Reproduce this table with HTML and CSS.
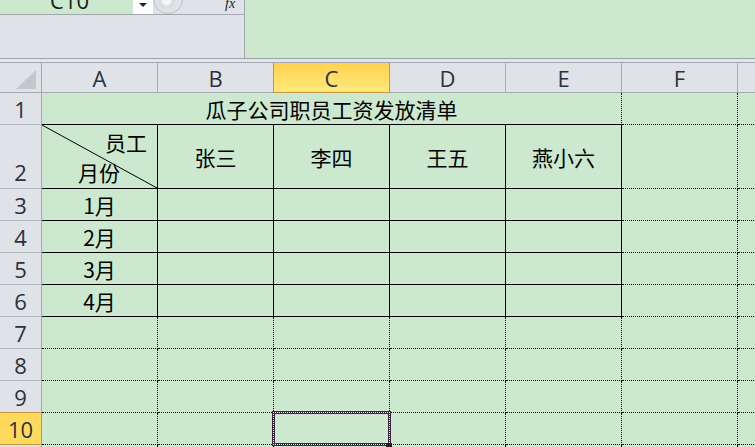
FILE: index.html
```html
<!DOCTYPE html>
<html lang="zh-CN">
<head>
    <meta charset="UTF-8">
    <title>瓜子公司职员工资发放清单</title>
    <link rel="stylesheet" href="styles.css">
</head>
<body>

<!-- Formula bar area -->
<div class="top">
    <div class="top-left">
        <div class="fbar">
            <div class="namebox"><span>C10</span></div>
            <div class="drop"><span class="arrow"></span></div>
            <div class="knob"></div>
            <div class="fx">fx</div>
        </div>
        <div class="panel"></div>
    </div>
    <div class="top-right"></div>
</div>
<div class="gap"></div>

<!-- Sheet grid -->
<div class="sheet">
    <div class="corner">
        <svg width="20" height="19" viewBox="0 0 20 19"><polygon points="20,0 20,19 0,19" fill="#c3c6ca"/></svg>
    </div>
    <div class="ch">A</div>
    <div class="ch">B</div>
    <div class="ch ch-sel">C</div>
    <div class="ch">D</div>
    <div class="ch">E</div>
    <div class="ch">F</div>
    <div class="ch"></div>

    <div class="rh">1</div>
    <div class="title">瓜子公司职员工资发放清单</div>
    <div class="c"></div>
    <div class="c"></div>

    <div class="rh rh-tall">2</div>
    <div class="t diag">
        <svg class="diag-line" viewBox="0 0 115 63" preserveAspectRatio="none"><line x1="0" y1="0" x2="115" y2="63" stroke="#000" stroke-width="1"/></svg>
        <div class="diag-top">员工</div>
        <div class="diag-bottom">月份</div>
    </div>
    <div class="t">张三</div>
    <div class="t">李四</div>
    <div class="t">王五</div>
    <div class="t">燕小六</div>
    <div class="c"></div>
    <div class="c"></div>

    <div class="rh">3</div>
    <div class="t">1月</div>
    <div class="t"></div><div class="t"></div><div class="t"></div><div class="t"></div>
    <div class="c"></div><div class="c"></div>

    <div class="rh">4</div>
    <div class="t">2月</div>
    <div class="t"></div><div class="t"></div><div class="t"></div><div class="t"></div>
    <div class="c"></div><div class="c"></div>

    <div class="rh">5</div>
    <div class="t">3月</div>
    <div class="t"></div><div class="t"></div><div class="t"></div><div class="t"></div>
    <div class="c"></div><div class="c"></div>

    <div class="rh">6</div>
    <div class="t">4月</div>
    <div class="t"></div><div class="t"></div><div class="t"></div><div class="t"></div>
    <div class="c"></div><div class="c"></div>

    <div class="rh">7</div>
    <div class="c"></div><div class="c"></div><div class="c"></div><div class="c"></div><div class="c"></div><div class="c"></div><div class="c"></div>

    <div class="rh">8</div>
    <div class="c"></div><div class="c"></div><div class="c"></div><div class="c"></div><div class="c"></div><div class="c"></div><div class="c"></div>

    <div class="rh">9</div>
    <div class="c"></div><div class="c"></div><div class="c"></div><div class="c"></div><div class="c"></div><div class="c"></div><div class="c"></div>

    <div class="rh rh-sel">10</div>
    <div class="c"></div>
    <div class="c"></div>
    <div class="c selected"><span class="handle"></span></div>
    <div class="c"></div><div class="c"></div><div class="c"></div><div class="c"></div>

    <div class="rh"></div>
    <div class="c"></div><div class="c"></div><div class="c"></div><div class="c"></div><div class="c"></div><div class="c"></div><div class="c"></div>
</div>

</body>
</html>
```

FILE: styles.css
```css
* {
    box-sizing: border-box;
}

body {
    margin: 0;
    width: 755px;
    height: 447px;
    overflow: hidden;
    background-color: #cce8cf;
    font-family: "Noto Sans CJK SC", sans-serif;
}

/* Formula bar */
.top {
    display: flex;
    height: 59px;
    border-bottom: 1px solid #9ea3a9;
}
.top-left {
    width: 245px;
    display: flex;
    flex-direction: column;
    border-right: 1px solid #a3a8ae;
}
.top-right {
    flex: 1;
    background-color: #cce8cf;
}
.fbar {
    display: flex;
    height: 15px;
    border-bottom: 1px solid #a3a8ae;
    background-color: #dfe2e7;
    overflow: hidden;
}
.namebox {
    width: 133px;
    background-color: #cce8cf;
    position: relative;
}
.namebox span {
    position: absolute;
    left: 50px;
    top: -15px;
    font-family: "Open Sans", sans-serif;
    font-size: 22px;
    color: #1a1a1a;
}
.drop {
    width: 20px;
    background-color: #fff;
    display: flex;
    justify-content: center;
    padding-top: 3px;
}
.arrow {
    width: 0;
    height: 0;
    border-left: 4px solid transparent;
    border-right: 4px solid transparent;
    border-top: 4px solid #222;
}
.knob {
    width: 30px;
    height: 30px;
    margin-top: -16px;
    border-radius: 50%;
    border: 1px solid #b8bcc2;
    background: radial-gradient(circle at 45% 55%, #f4f5f7 0 18%, #d9dce0 28%, #e4e6ea 60%);
}
.fx {
    margin-left: 42px;
    margin-top: -4px;
    font-family: "Liberation Serif", serif;
    font-style: italic;
    font-size: 14px;
    color: #222;
}
.panel {
    flex: 1;
    background-color: #dfe2e7;
}
.gap {
    height: 3px;
    background-color: #e3e5e9;
}

/* Sheet */
.sheet {
    display: grid;
    grid-template-columns: 42px repeat(7, 116px);
    grid-template-rows: 30px 32px 64px repeat(9, 32px);
    border-top: 1px solid #a3a8ae;
}
.corner {
    background-color: #dfe2e7;
    border-right: 1px solid #a3a8ae;
    border-bottom: 1px solid #a3a8ae;
    display: flex;
    justify-content: flex-end;
    align-items: flex-end;
    padding: 0 5px 3px 0;
}
.ch {
    background-color: #dfe2e7;
    border-right: 1px solid #a9aeb4;
    border-bottom: 1px solid #a3a8ae;
    display: flex;
    justify-content: center;
    align-items: center;
    font-family: "Open Sans", sans-serif;
    font-size: 22px;
    color: #2a3140;
}
.ch-sel {
    background: linear-gradient(#ffd24f, #ffe97d);
    border-right-color: #c8963c;
    border-bottom-color: #c8963c;
    box-shadow: -1px 0 0 #c8963c;
}
.rh {
    background-color: #dfe2e7;
    border-right: 1px solid #a3a8ae;
    border-bottom: 1px solid #b3b8be;
    display: flex;
    justify-content: center;
    align-items: center;
    font-family: "Open Sans", sans-serif;
    font-size: 22px;
    color: #2a3140;
}
.rh-tall {
    align-items: flex-end;
    padding-bottom: 1px;
}
.rh-sel {
    background-color: #ffd95c;
    border-right-color: #c8963c;
    border-bottom-color: #c8963c;
    box-shadow: 0 -1px 0 #c8963c;
}

/* Cells */
.c {
    border-right: 1px dotted #000;
    border-bottom: 1px dotted #000;
}
.t {
    border-right: 1px solid #000;
    border-bottom: 1px solid #000;
    display: flex;
    justify-content: center;
    align-items: center;
    font-size: 21px;
    color: #000;
}
.title {
    grid-column: span 5;
    border-right: 1px dotted #000;
    border-bottom: 1px solid #000;
    display: flex;
    justify-content: center;
    align-items: center;
    font-size: 21px;
    color: #000;
}

/* Diagonal header cell */
.diag {
    position: relative;
    flex-direction: column;
    align-items: stretch;
    justify-content: flex-start;
    padding-top: 2px;
    line-height: 30px;
}
.diag-line {
    position: absolute;
    left: 0;
    top: 0;
    width: 115px;
    height: 63px;
}
.diag-top {
    text-align: right;
    padding-right: 10px;
}
.diag-bottom {
    padding-left: 36px;
}

/* Active cell */
.selected {
    position: relative;
}
.selected::before {
    content: "";
    position: absolute;
    left: -2px;
    top: -2px;
    right: -2px;
    bottom: -2px;
    border: 3px solid #3d2140;
}
.selected::after {
    content: "";
    position: absolute;
    left: -1px;
    top: -1px;
    right: -1px;
    bottom: -1px;
    border: 1px dotted #fff;
}
.handle {
    position: absolute;
    right: -3px;
    bottom: -5px;
    width: 6px;
    height: 6px;
    background-color: #2b1a2e;
    z-index: 1;
}
```
